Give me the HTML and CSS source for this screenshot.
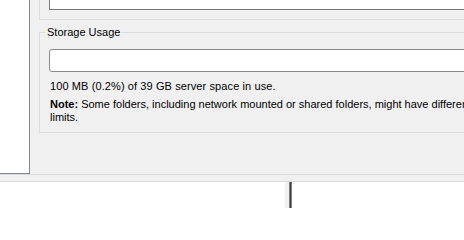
FILE: index.html
```html
<!DOCTYPE html>
<html>
<head>
<meta charset="utf-8">
<link rel="stylesheet" href="styles.css">
</head>
<body>
<div class="main">
  <div class="tree"></div>
  <div class="panel">
    <div class="group group-top"><div class="field"></div></div>
    <fieldset class="group storage">
      <legend>Storage Usage</legend>
      <div class="meter"></div>
      <p class="usage">100 MB (0.2%) of 39 GB server space in use.</p>
      <p class="note"><b>Note:</b> Some folders, including network mounted or shared folders, might have different limits.</p>
    </fieldset>
  </div>
</div>
<div class="statusbar"></div>
<div class="lower">
  <div class="lower-left"></div>
  <div class="splitter"></div>
  <div class="sash"></div>
  <div class="lower-right"></div>
</div>
</body>
</html>
```
FILE: styles.css
```css
html, body {
  margin: 0;
  padding: 0;
  background: #fff;
  overflow: hidden;
}
body {
  width: 464px;
  height: 208px;
  font-family: "Liberation Sans", Arial, sans-serif;
  font-size: 11px;
  color: #000;
}
.main {
  display: flex;
  height: 174px;
  background: #f0f0f0;
}
.tree {
  flex: none;
  width: 29px;
  height: 173px;
  background: #fff;
  border-right: 1px solid #828790;
  border-bottom: 1px solid #828790;
}
.panel {
  flex: none;
  width: 600px;
  display: flex;
  flex-direction: column;
}
.group-top {
  margin-left: 9px;
  width: 540px;
  height: 19px;
  border: 1px solid #dcdcdc;
  border-top: none;
}
.field {
  margin-left: 9px;
  height: 9px;
  background: #fff;
  border: 1px solid #7a7a7a;
  border-top: none;
}
.storage {
  margin: 6px 0 0 9px;
  padding: 10px 9px 8px 9px;
  width: 522px;
  min-width: 0;
  border: 1px solid #dcdcdc;
}
.storage legend {
  margin-left: -4px;
  padding: 0 2px;
  line-height: 13px;
  font-size: 11px;
}
.meter {
  height: 21px;
  border: 1px solid #8a8a8a;
  border-radius: 3px;
  background: #fff;
}
.usage {
  margin: 8px 0 0 1px;
  line-height: 13px;
  letter-spacing: 0.1px;
  white-space: nowrap;
}
.note {
  margin: 5px 0 0 1px;
  width: 440px;
  line-height: 13px;
}
.statusbar {
  height: 6px;
  background: #f0f0f0;
  border-top: 1px solid #dadada;
  border-bottom: 1px solid #dadada;
}
.lower {
  display: flex;
  height: 26px;
}
.lower-left {
  flex: none;
  width: 285px;
}
.splitter {
  flex: none;
  width: 4px;
  background: #f0f0f0;
}
.sash {
  flex: none;
  width: 1px;
  background: #3f3f3f;
  border-left: 1px solid #7d7d7d;
  border-right: 1px solid #7d7d7d;
}
.lower-right {
  flex: 1;
}
```
